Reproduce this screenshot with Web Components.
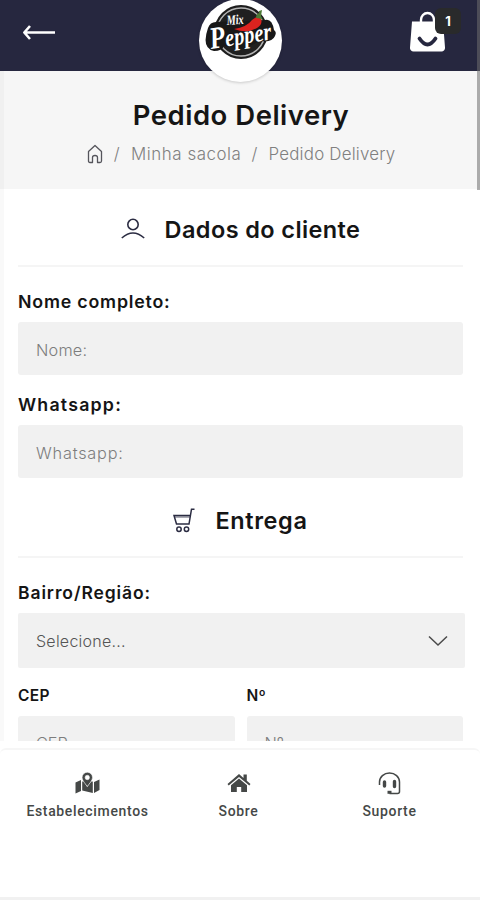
<!DOCTYPE html>
<html lang="pt-BR">
<head>
<meta charset="utf-8">
<title>Pedido Delivery</title>
<style>
    html, body {
        margin: 0;
        height: 100%;
        overflow: hidden;
        background: #fff;
        font-family: Inter, "Liberation Sans", sans-serif;
        color: #151515;
    }
</style>
</head>
<body>
<mp-app>
    <mp-header slot="header" count="1"></mp-header>
    <mp-page-title heading="Pedido Delivery">
        <span style="letter-spacing: .55px">Minha sacola</span>
        <span style="letter-spacing: .2px">Pedido Delivery</span>
    </mp-page-title>
    <mp-section icon="user" style="--space: .4px">Dados do cliente</mp-section>
    <mp-field label="Nome completo:" placeholder="Nome:" style="--hint-space: .2px; --label-space: .8px"></mp-field>
    <mp-field label="Whatsapp:" placeholder="Whatsapp:" style="--hint-space: .8px; --label-space: 1.2px"></mp-field>
    <mp-section icon="cart" style="--top: -13px; --space: .6px">Entrega</mp-section>
    <mp-select label="Bairro/Região:">Selecione...</mp-select>
    <mp-row>
        <mp-field label="CEP" placeholder="CEP" small></mp-field>
        <mp-field label="Nº" placeholder="Nº" small></mp-field>
    </mp-row>
    <mp-tabs slot="footer">
        <mp-tab icon="map">Estabelecimentos</mp-tab>
        <mp-tab icon="home">Sobre</mp-tab>
        <mp-tab icon="headset">Suporte</mp-tab>
    </mp-tabs>
</mp-app>

<script>
const ICONS = {
    back: `<svg width="34" height="16" viewBox="0 0 34 16" fill="none" stroke="#fff" stroke-width="2.6"><path d="M2 8.500H33M8 2 2.300 8.500 8 15" stroke-linejoin="round"/></svg>`,
    bag: `<svg width="38" height="42" viewBox="0 0 38 42"><path d="M12 13V9a6.500 7 0 0 1 13 0v4" fill="none" stroke="#fff" stroke-width="2.400"/><path d="M3 10.500h31l2 26a3.500 3.500 0 0 1-3.500 4H4.500a3.500 3.500 0 0 1-3.500-4z" fill="#fff"/><path d="M10.500 27.500q8 12 16 0" fill="none" stroke="#26273f" stroke-width="3.800" stroke-linecap="round"/></svg>`,
    crumbHome: `<svg width="16" height="20" viewBox="0 0 16 20" fill="none" stroke="#55555c" stroke-width="1.300" stroke-linejoin="round"><path d="M1.500 7.500 8 1.500l6.500 6v9.500q0 1.500-1.500 1.500h-2.500v-5q0-2-2.500-2t-2.500 2v5H3q-1.500 0-1.500-1.500z"/></svg>`,
    user: `<svg width="24" height="22" viewBox="0 0 24 22" fill="none" stroke="#2b2c42" stroke-width="1.600"><circle cx="12" cy="6.500" r="5.200"/><path d="M.8 20q11.200-10 22.400 0"/></svg>`,
    cart: `<svg width="22" height="25" viewBox="0 0 22 25" fill="none" stroke="#2b2c42" stroke-width="1.500"><path d="M21.500 1.200h-3L16 16H3.500L1 7.500h16"/><path d="M1.500 9H17" stroke-width=".8"/><circle cx="6" cy="21.200" r="2.200"/><circle cx="13.500" cy="21.200" r="2.200"/></svg>`,
    chevron: `<svg width="20" height="12" viewBox="0 0 20 12" fill="none" stroke="#4a4a4a" stroke-width="1.500"><path d="M1 1.500 10 10l9-8.500"/></svg>`,
    map: `<svg width="25" height="22" viewBox="0 0 25 22" fill="#454847"><path d="M.5 10.500 6 8v11L.5 21.500zM19 10l5.500-2.500V18L19 21zM7.200 9.500h1.500l3.500 5.500 4-5.500h1.600v11.500L7.200 18.500z"/><path fill-rule="evenodd" d="M12.300.3a5.200 5.200 0 0 1 5.200 5.200c0 3-3.400 6.500-5.200 8.800-1.800-2.300-5.200-5.800-5.200-8.800A5.200 5.200 0 0 1 12.300.3m0 3a2.200 2.200 0 1 0 0 4.400 2.200 2.200 0 0 0 0-4.400z" stroke="#fff" stroke-width=".5"/></svg>`,
    home: `<svg width="24" height="20" viewBox="0 0 24 20" fill="#454847"><path d="M.5 11 12 1l4.500 3.900V1.500h3.300v6.300l3.700 3.200-1.200 1.500L12 3.900 1.700 12.500z"/><path d="M4 12.200 12 5.600l8 6.600V19h-5.800v-5H9.800v5H4z"/></svg>`,
    headset: `<svg width="24" height="23" viewBox="0 0 24 23" fill="none" stroke="#454847"><path d="M1.500 13V10a10 9 0 0 1 20 0V19.500q0 2-2 2h-8" stroke-width="1.500"/><path d="M6.500 10v4M16.500 9.500v5" stroke-width="3.400" stroke-linecap="round"/><path d="M9.500 20.300h4" stroke-width="3"/></svg>`
};

// Common base: opens the shadow root and fills it
class MpElement extends HTMLElement {

    constructor() {
        super();
        this.attachShadow({mode: 'open'});
    }

    connectedCallback() {
        this.shadowRoot.innerHTML = this.render();
    }

}

class MpApp extends MpElement {

    render() {
        return `
            <style>
                :host { display: flex; flex-direction: column; height: 900px; width: 480px; }
                main { height: 670px; overflow: hidden; box-sizing: border-box; }
                .scroll { position: absolute; top: 0; right: 0; width: 3px; height: 190px; background: rgba(110, 110, 110, .55); z-index: 3; }
                .edge { position: absolute; top: 71px; left: 0; width: 4px; height: 670px; background: rgba(0, 0, 0, .025); }
            </style>
            <slot name="header"></slot>
            <main><slot></slot></main>
            <slot name="footer"></slot>
            <div class="scroll"></div>
            <div class="edge"></div>
            `;
    }

}

class MpHeader extends MpElement {

    render() {
        return `
            <style>
                :host { display: flex; justify-content: space-between; box-sizing: border-box; height: 71px; flex: none;
                    padding: 0 19px 0 22px; background: #26273f; position: relative; z-index: 2; }
                .back { margin-top: 24px; }
                .cart { display: flex; margin-top: 11px; position: relative; width: 52px; }
                svg { display: block; }
                .count { position: absolute; left: 26px; top: -3px; width: 26px; height: 26px; border-radius: 6px;
                    background: #292a2b; color: #fff; font: 700 13px/27px Inter, sans-serif; text-align: center; }
                mp-logo { position: absolute; left: 199px; top: -1px; }
            </style>
            <div class="back">${ICONS.back}</div>
            <mp-logo></mp-logo>
            <div class="cart">${ICONS.bag}<span class="count">${this.getAttribute('count')}</span></div>
            `;
    }

}

class MpLogo extends MpElement {

    render() {
        return `
            <style>
                :host { display: block; width: 83px; height: 83px; border-radius: 50%; background: #fff; box-shadow: 0 1px 3px rgba(0, 0, 0, .18); }
                svg { display: block; overflow: visible; }
                text { font-family: "Liberation Serif", serif; font-weight: 700; font-style: italic; fill: #fff; }
            </style>
            <svg width="83" height="83" viewBox="0 0 83 83">
                <circle cx="42" cy="33" r="27" fill="#1d1d1d"/>
                <circle cx="42" cy="33" r="24" fill="#202020" stroke="#b5b5b5" stroke-width="1.500"/>
                <path d="M9 29q-7 20 6 23 8 0 10-5l20 3 16-8q12 2 15-5 2-4-1-6-2-12-9-10L17 23q-6 0-8 6z" fill="#181818"/>
                <path d="M35 30q13-2 18-9 5-5 9-1 2 5-4 9-10 6-23 1z" fill="#dc231f"/>
                <path d="M57 19q0-4 3-5v-2l3-1-1 6 2 4q-3-2-7-2z" fill="#4c7a35"/>
                <text x="12" y="50" textLength="62" lengthAdjust="spacingAndGlyphs" transform="rotate(-9 12 50)"><tspan font-size="31">P</tspan><tspan font-size="25">epper</tspan></text>
                <text x="28" y="26" font-size="14" textLength="17" lengthAdjust="spacingAndGlyphs" transform="rotate(-4 28 26)">Mix</text>
            </svg>
            `;
    }

}

class MpPageTitle extends MpElement {

    render() {
        return `
            <style>
                :host { display: flex; flex-direction: column; align-items: center; box-sizing: border-box; height: 118px; padding-top: 25px; background: #f6f6f6; }
                h1 { margin: 0 0 0 2px; font-size: 27.500px; font-weight: 580; line-height: 38px; letter-spacing: .5px; }
                nav { display: flex; align-items: center; height: 24px; margin: 8px 0 0 2px; font-size: 16.900px; font-weight: 300; color: #808080; }
                nav svg { display: block; margin-right: 11px; }
                ::slotted(span)::before { content: "/"; margin-right: 11px; }
                ::slotted(span) { margin-right: 10px; white-space: nowrap; }
                ::slotted(span:last-of-type) { margin-right: 0; }
            </style>
            <h1>${this.getAttribute('heading')}</h1>
            <nav>${ICONS.crumbHome}<slot></slot></nav>
            `;
    }

}

class MpSection extends MpElement {

    render() {
        return `
            <style>
                :host { display: flex; justify-content: center; align-items: center; gap: 20px; height: 34px;
                    margin: var(--top, 0) 17px 20px 18px; padding: 23px 0 19px; border-bottom: 2px solid #f5f5f5;
                    font-size: 23.500px; font-weight: 570; letter-spacing: var(--space, 0); }
                svg { display: block; }
            </style>
            ${ICONS[this.getAttribute('icon')]}
            <span><slot></slot></span>
            `;
    }

}

class MpField extends MpElement {

    render() {
        return `
            <style>
                :host { display: block; margin: 0 17px 15px 18px; }
                label { display: block; height: 30px; line-height: 30px; font-size: 17.800px; font-weight: 600; letter-spacing: var(--label-space, .9px); margin-bottom: 5px; }
                .box { height: 53px; padding: 0 18px; border-radius: 3px; background: #f1f1f1; color: #7d7d7d; font-size: 16.300px; font-weight: 300;
                    line-height: 56px; letter-spacing: var(--hint-space, 0); }
                :host([small]) { margin: 0; }
                :host([small]) label { font-size: 15.500px; letter-spacing: .3px; }
                :host([small]) .box { line-height: 55px; }
            </style>
            <label>${this.getAttribute('label')}</label>
            <div class="box">${this.getAttribute('placeholder')}</div>
            `;
    }

}

class MpSelect extends MpElement {

    render() {
        return `
            <style>
                :host { display: block; margin: 0 15px 13px 18px; }
                label { display: block; height: 30px; line-height: 30px; font-size: 17.500px; font-weight: 600; letter-spacing: .9px; margin-bottom: 5px; }
                .box { display: flex; align-items: center; justify-content: space-between; height: 55px; padding: 1px 17px 0 18px; box-sizing: border-box;
                    border-radius: 2px; background: #f1f1f1; color: #555; font-size: 16px; font-weight: 350; letter-spacing: .25px; }
            </style>
            <label>${this.getAttribute('label')}</label>
            <div class="box"><span><slot></slot></span>${ICONS.chevron}</div>
            `;
    }

}

class MpRow extends MpElement {

    render() {
        return `
            <style>
                :host { display: grid; grid-template-columns: 1fr 1fr; gap: 12px; margin: 0 17px 0 18px; }
            </style>
            <slot></slot>
            `;
    }

}

class MpTabs extends MpElement {

    render() {
        return `
            <style>
                :host { display: grid; grid-template-columns: 151px 151px 151px; box-sizing: border-box; height: 152px; margin-top: 7px; padding: 21px 0 0 12px;
                    border-top: 2px solid #f6f6f6; border-bottom: 3px solid #f1f1f1; background: #fff; border-radius: 6px 6px 0 0; }
            </style>
            <slot></slot>
            `;
    }

}

class MpTab extends MpElement {

    render() {
        return `
            <style>
                :host { display: flex; flex-direction: column; align-items: center; font: 500 14px/20px Roboto, sans-serif; letter-spacing: .65px; color: #454847; }
                .icon { display: flex; align-items: center; height: 24px; margin-bottom: 6px; }
            </style>
            <div class="icon">${ICONS[this.getAttribute('icon')]}</div>
            <span><slot></slot></span>
            `;
    }

}

customElements.define('mp-app', MpApp);
customElements.define('mp-header', MpHeader);
customElements.define('mp-logo', MpLogo);
customElements.define('mp-page-title', MpPageTitle);
customElements.define('mp-section', MpSection);
customElements.define('mp-field', MpField);
customElements.define('mp-select', MpSelect);
customElements.define('mp-row', MpRow);
customElements.define('mp-tabs', MpTabs);
customElements.define('mp-tab', MpTab);
</script>
</body>
</html>
